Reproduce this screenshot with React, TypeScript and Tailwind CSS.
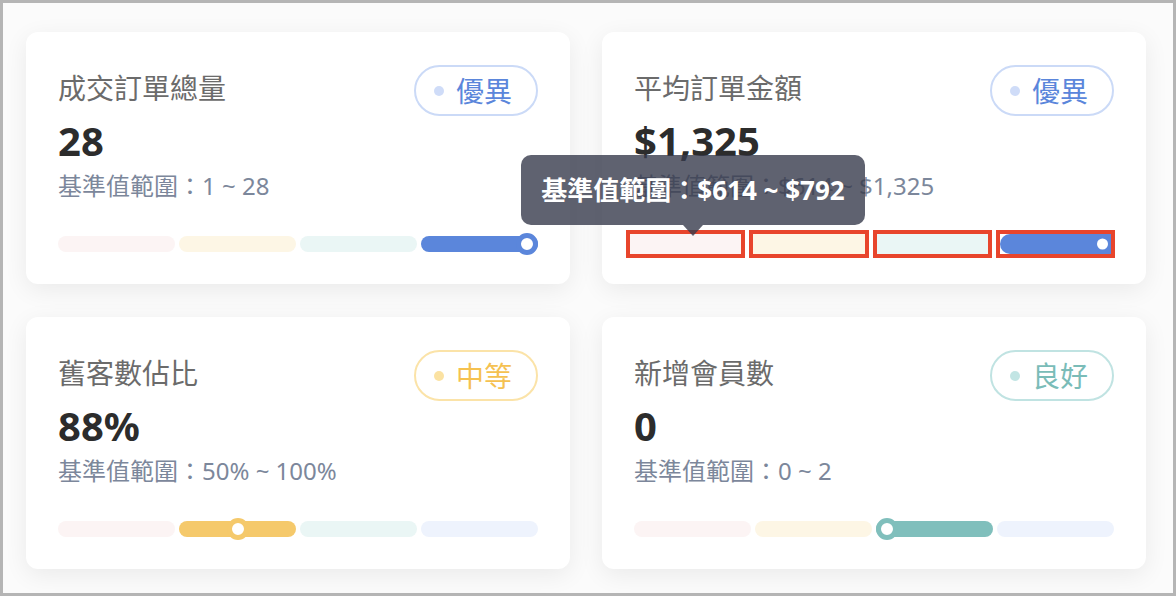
const TRACKS = ['bg-[#fcf4f4]', 'bg-[#fdf6e5]', 'bg-[#eaf6f5]', 'bg-[#eef3fd]'];
const ACTIVE = ['bg-[#e98a8a]', 'bg-[#f5c96b]', 'bg-[#80bfbc]', 'bg-[#5b86db]'];
const KNOB = ['border-[#e98a8a]', 'border-[#f5c96b]', 'border-[#80bfbc]', 'border-[#5b86db]'];

const BADGES = {
    blue: { box: 'border-[#cbdaf7]', dot: 'bg-[#cfdcf8]', text: 'text-[#5b86db]' },
    yellow: { box: 'border-[#fbe3a8]', dot: 'bg-[#fbe2a2]', text: 'text-[#f5c150]' },
    teal: { box: 'border-[#c0e3e2]', dot: 'bg-[#c2e5e4]', text: 'text-[#7abcb8]' },
};

type Metric = {
    title: string;
    value: string;
    range: string;
    label: string;
    tone: keyof typeof BADGES;
    level: number;
    pos: number;
    inspect?: boolean;
};

const metrics: Metric[] = [
    { title: '成交訂單總量', value: '28', range: '基準值範圍：1 ~ 28', label: '優異', tone: 'blue', level: 3, pos: 100 },
    { title: '平均訂單金額', value: '$1,325', range: '基準值範圍：$614 ~ $1,325', label: '優異', tone: 'blue', level: 3, pos: 100, inspect: true },
    { title: '舊客數佔比', value: '88%', range: '基準值範圍：50% ~ 100%', label: '中等', tone: 'yellow', level: 1, pos: 50 },
    { title: '新增會員數', value: '0', range: '基準值範圍：0 ~ 2', label: '良好', tone: 'teal', level: 2, pos: 0 },
];

function Badge({ label, tone }: { label: string; tone: keyof typeof BADGES }) {
    const c = BADGES[tone];
    return (
        <div className={`flex items-center gap-3 h-[51px] w-[124px] pl-[18px] rounded-full border-2 bg-white ${c.box}`}>
            <span className={`w-[10px] h-[10px] rounded-full ${c.dot}`} />
            <span className={`text-[28px] leading-none ${c.text}`}>{label}</span>
        </div>
    );
}

// Normal benchmark bar: four tracks, the active one filled with a knob
function LevelBar({ level, pos }: { level: number; pos: number }) {
    return (
        <div className="flex gap-1 h-4 mt-[35px]">
            {TRACKS.map((track, i) => (
                <div key={i} className={`relative flex-1 rounded-full ${i === level ? ACTIVE[i] : track}`}>
                    {i === level && (
                        <span
                            className={`absolute top-1/2 w-[22px] h-[22px] rounded-full bg-white border-[5px] ${KNOB[i]}`}
                            style={{ left: `${pos}%`, transform: `translate(-${pos}%, -50%)` }}
                        />
                    )}
                </div>
            ))}
        </div>
    );
}

// Bar with inspector outlines (devtools highlight) and hover tooltip
function InspectBar({ level }: { level: number }) {
    return (
        <div className="flex items-center gap-3 h-4 mt-[35px] -ml-1 w-[481px]">
            {TRACKS.map((track, i) => (
                <div key={i} className="relative flex-1 h-5 outline-4 outline-[#e8452c] overflow-hidden">
                    {i === level ? (
                        <div className={`h-full rounded-l-full ${ACTIVE[i]}`}>
                            <span className="absolute right-[3px] top-1/2 -translate-y-1/2 w-[11px] h-[11px] rounded-full bg-white" />
                        </div>
                    ) : (
                        <div className={`h-full ${track}`} />
                    )}
                </div>
            ))}
        </div>
    );
}

function Tooltip() {
    return (
        <div className="absolute left-[-81px] top-[123px] w-[344px] h-[70px] rounded-[10px] bg-[rgba(55,59,76,0.8)] flex items-center justify-center text-white text-[26px] leading-none font-bold z-10">
            基準值範圍：$614 ~ $792
            <span className="absolute top-full left-1/2 -translate-x-1/2 border-x-[10px] border-x-transparent border-t-[11px] border-t-[rgba(55,59,76,0.8)]" />
        </div>
    );
}

function MetricCard({ m }: { m: Metric }) {
    return (
        <div className="relative bg-white rounded-xl px-8 pt-[33px] pb-8 shadow-[0_6px_24px_rgba(0,0,0,0.07)]">
            <div className="flex items-center justify-between h-[51px]">
                <h3 className="text-[28px] text-[#6b6b6b] leading-none pb-[6px]">{m.title}</h3>
                <Badge label={m.label} tone={m.tone} />
            </div>
            <div className="mt-[3px] text-[40px] leading-[44px] font-bold text-[#2c2c2c]">{m.value}</div>
            <div className="mt-2 text-[24px] leading-[30px] text-[#7c879b]">{m.range}</div>
            {m.inspect ? <InspectBar level={m.level} /> : <LevelBar level={m.level} pos={m.pos} />}
            {m.inspect && <Tooltip />}
        </div>
    );
}

export default function App() {
    return (
        <div className="w-[1176px] h-[596px] border-[3px] border-[#b5b5b5] bg-[#fbfbfb] font-['Noto_Sans','Noto_Sans_CJK_TC',sans-serif] pl-[23px] pt-[29px]">
            <div className="grid grid-cols-[544px_544px] gap-x-8 gap-y-[33px]">
                {metrics.map((m) => (
                    <MetricCard key={m.title} m={m} />
                ))}
            </div>
        </div>
    );
}
